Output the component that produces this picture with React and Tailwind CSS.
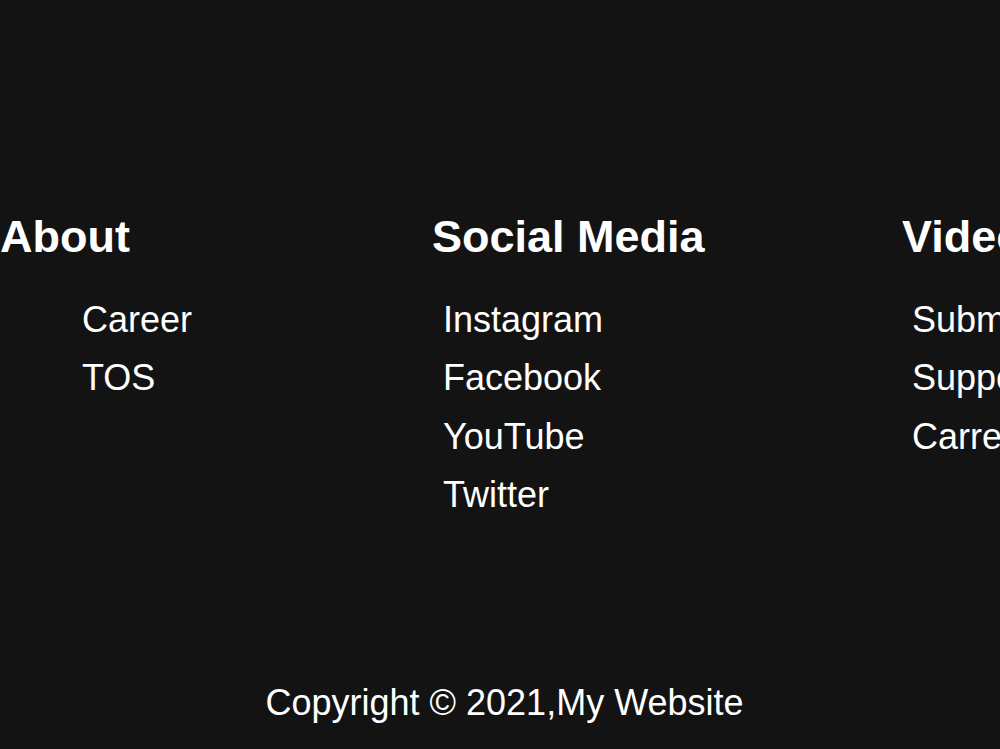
import React from "react";

const columns = [
  {
    title: "About",
    width: "w-[432px]",
    indent: "pl-[82px]",
    links: ["Career", "TOS"],
  },
  {
    title: "Social Media",
    width: "w-[470px]",
    indent: "pl-[11px]",
    links: ["Instagram", "Facebook", "YouTube", "Twitter"],
  },
  {
    title: "Videos",
    width: "flex-1",
    indent: "pl-[10px]",
    links: ["Submit Video", "Support", "Carrers"],
  },
];

const Footer = () => {
  return (
    <footer
      className="w-full h-[749px] bg-[#131313] text-white overflow-hidden flex flex-col"
      style={{ fontFamily: "'Liberation Sans', Arial, sans-serif" }}
    >
      {/* link columns */}
      <div className="flex pt-[211px] whitespace-nowrap">
        {columns.map((col) => (
          <div key={col.title} className={`${col.width} shrink-0 min-w-0`}>
            <h2 className="text-[45px] leading-[52px] font-bold">{col.title}</h2>
            <ul className={`mt-[28px] ${col.indent}`}>
              {col.links.map((link) => (
                <li key={link} className="text-[36px] leading-[58.3px]">
                  <a href="#">{link}</a>
                </li>
              ))}
            </ul>
          </div>
        ))}
      </div>

      <p className="mt-auto mb-[26px] text-center text-[36px] leading-[41px] pl-[9px]">
        Copyright © 2021,My Website
      </p>
    </footer>
  );
};

export default function App() {
  return <Footer />;
}
